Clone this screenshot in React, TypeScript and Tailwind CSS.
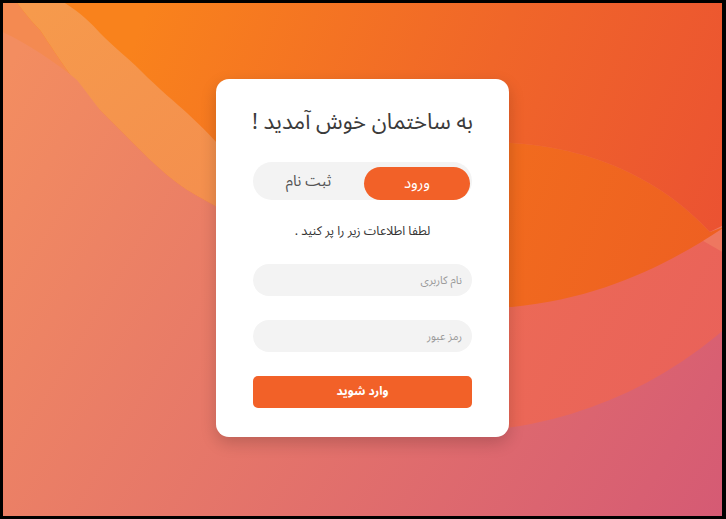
function Wallpaper() {
  return (
    <svg
      className="absolute inset-0 h-full w-full"
      viewBox="3 3 719 513"
      preserveAspectRatio="none"
      aria-hidden="true"
    >
      <defs>
        <linearGradient id="base" gradientUnits="userSpaceOnUse" x1="0" y1="80" x2="726" y2="519">
          <stop offset="0" stopColor="#f38d60" />
          <stop offset="1" stopColor="#d55a74" />
        </linearGradient>
        <linearGradient id="top" gradientUnits="userSpaceOnUse" x1="150" y1="0" x2="726" y2="230">
          <stop offset="0" stopColor="#f9821c" />
          <stop offset="0.55" stopColor="#f06629" />
          <stop offset="1" stopColor="#eb5232" />
        </linearGradient>
        <linearGradient id="lens" gradientUnits="userSpaceOnUse" x1="500" y1="180" x2="726" y2="260">
          <stop offset="0" stopColor="#f16b1e" />
          <stop offset="1" stopColor="#ee5f22" />
        </linearGradient>
        <linearGradient id="salmon" gradientUnits="userSpaceOnUse" x1="500" y1="280" x2="726" y2="400">
          <stop offset="0" stopColor="#ec6a56" />
          <stop offset="1" stopColor="#e9615a" />
        </linearGradient>
        <linearGradient id="band" gradientUnits="userSpaceOnUse" x1="40" y1="0" x2="220" y2="200">
          <stop offset="0" stopColor="#f69a4c" />
          <stop offset="1" stopColor="#f48f4e" />
        </linearGradient>
      </defs>

      {/* base: peach to pink */}
      <rect x="0" y="0" width="726" height="519" fill="url(#base)" />

      {/* salmon disc, lower right */}
      <circle cx="449" cy="12" r="420" fill="url(#salmon)" />

      {/* warm orange top */}
      <path
        d="M0 0 H726 V224 L710 232 C680 200 620 150 512 143 C420 138 330 170 260 240 L0 260 Z"
        fill="url(#top)"
      />

      {/* light sliver at right edge */}
      <path d="M698 238 L726 224 L726 254 Z" fill="#ee7760" />

      {/* orange lens */}
      <path
        d="M710 232 C680 200 620 150 512 143 C420 138 330 170 300 230 C300 290 400 310 512 307 C605 298 672 262 726 226 Z"
        fill="url(#lens)"
      />

      {/* wedge left of the band */}
      <path
        d="M0 0 H15 C25 14 35 25 40 30 C50 45 60 60 67 70 C80 90 90 100 100 110 C115 125 130 140 143 153 C160 170 175 182 187 190 C200 198 210 203 217 207 L217 519 L0 519 Z"
        fill="#f48a51"
      />

      {/* light band */}
      <path
        d="M15 0 H60 C80 12 90 22 100 33 C115 48 128 58 140 70 C160 90 175 102 187 113 C200 125 210 135 217 143 L260 190 L230 215 L217 207 C210 203 200 198 187 190 C175 182 160 170 143 153 C130 140 115 125 100 110 C90 100 80 90 67 70 C60 60 50 45 40 30 C35 25 25 14 15 0 Z"
        fill="url(#band)"
      />

      {/* peach, rest of the left side */}
      <path
        d="M0 31 C25 42 55 62 77 80 C85 90 92 100 100 110 C115 125 130 140 143 153 C160 170 175 182 187 190 C200 198 210 203 217 207 C260 240 330 300 330 437 L330 519 L0 519 Z"
        fill="url(#base)"
      />
    </svg>
  )
}

export default function App() {
  return (
    <div className="h-[519px] w-[726px] bg-black pt-[3px] pl-[3px] pr-[4px] pb-[3px]">
      <div className="relative flex h-full w-full items-center justify-center overflow-hidden">
        <Wallpaper />

        {/* Login card */}
        <div
          dir="rtl"
          className="relative mb-[3px] flex w-[293px] flex-col rounded-[13px] bg-white px-[37px] pt-[27px] pb-[29px] shadow-[0_6px_16px_rgba(0,0,0,0.18)]"
          style={{ fontFamily: '"Noto Sans Arabic", "Noto Sans", "DejaVu Sans", sans-serif' }}
        >
          <h1 className="-mx-[4px] h-[32px] whitespace-nowrap text-center text-[22px] leading-[32px] text-[#3b3b3b]">
            به ساختمان خوش آمدید !
          </h1>

          {/* Tabs */}
          <div className="mt-[24px] flex h-[38px] rounded-full bg-[#f3f3f3] pr-[2px]">
            <button className="mt-[5px] h-[33px] w-[106px] rounded-full bg-[#f26128] text-[15px] text-white">
              ورود
            </button>
            <button className="flex-1 text-[15px] text-[#555555]">ثبت نام</button>
          </div>

          <p className="mt-[21px] h-[20px] text-center text-[12.5px] leading-[20px] text-[#333333]">
            لطفا اطلاعات زیر را پر کنید .
          </p>

          <input
            placeholder="نام کاربری"
            className="mt-[23px] h-[32px] w-full rounded-full bg-[#f3f3f3] px-[10px] text-[11px] text-[#333] outline-none placeholder:text-[#9a9a9a]"
          />
          <input
            type="password"
            placeholder="رمز عبور"
            className="mt-[24px] h-[32px] w-full rounded-full bg-[#f3f3f3] px-[10px] text-[11px] text-[#333] outline-none placeholder:text-[#9a9a9a]"
          />

          <button className="mt-[24px] h-[32px] w-full rounded-[5px] bg-[#f26128] text-[12px] font-bold text-white">
            وارد شوید
          </button>
        </div>
      </div>
    </div>
  )
}
